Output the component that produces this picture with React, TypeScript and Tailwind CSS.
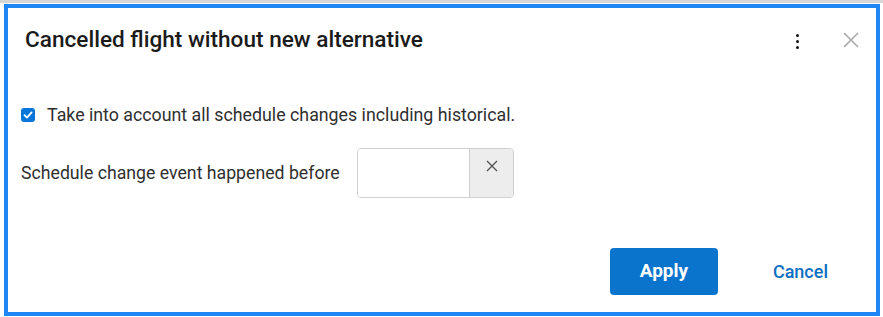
import React from "react";

export default function App() {
  return (
    <div className="w-[883px] h-[317px] bg-white relative overflow-hidden" style={{ fontFamily: "Roboto, 'Liberation Sans', sans-serif" }}>
      <div className="h-[3px] bg-[#d6d6d6]" />
      <div className="ml-[4px] mt-[1px] w-[876px] h-[312px] border-4 border-[#1f87f5] flex flex-col">
        <div className="flex items-center h-[62px] pl-[17px] pr-[16px]">
          <div className="text-[22.6px] leading-[28px] font-medium text-[#1b1b1b] flex-1 pt-[2px]">Cancelled flight without new alternative</div>
          <div className="flex flex-col gap-[3px] items-center mr-[44px] mt-[4px]">
            <span className="w-[3px] h-[3px] rounded-full bg-[#111]" />
            <span className="w-[3px] h-[3px] rounded-full bg-[#111]" />
            <span className="w-[3px] h-[3px] rounded-full bg-[#111]" />
          </div>
          <svg width="16" height="16" viewBox="0 0 16 16" className="mr-[1px] mt-[2px]">
            <path d="M1 1 L15 15 M15 1 L1 15" stroke="#a9a9a9" strokeWidth="1.6" />
          </svg>
        </div>
        <div className="flex items-center gap-[12px] pl-[13px] mt-[33px]">
          <span className="w-[14px] h-[14px] rounded-[3px] bg-[#0b76da] flex items-center justify-center">
            <svg width="10" height="10" viewBox="0 0 10 10">
              <path d="M1.5 5.2 L4 7.6 L8.6 2.4" stroke="white" strokeWidth="1.8" fill="none" strokeLinecap="round" strokeLinejoin="round" />
            </svg>
          </span>
          <span className="text-[17.8px] leading-[24px] text-[#2f2f2f]">Take into account all schedule changes including historical.</span>
        </div>
        <div className="flex items-center pl-[13px] mt-[21px]">
          <span className="text-[17.7px] text-[#2f2f2f] w-[336px]">Schedule change event happened before</span>
          <div className="flex h-[50px] w-[157px] border border-[#cfcfcf] rounded-[4px] overflow-hidden">
            <div className="w-[111px] bg-white" />
            <div className="flex-1 bg-[#ededed] border-l border-[#cfcfcf] flex items-start justify-center pt-[11px]">
              <svg width="12" height="12" viewBox="0 0 12 12">
                <path d="M1 1 L11 11 M11 1 L1 11" stroke="#555" strokeWidth="1.4" />
              </svg>
            </div>
          </div>
        </div>
        <div className="flex justify-end items-center mt-[50px] pr-[48px] gap-[55px]">
          <button className="w-[108px] h-[47px] rounded-[4px] bg-[#0a74cc] text-white text-[19px] font-bold">Apply</button>
          <span className="text-[18px] font-medium text-[#0d6fc1]">Cancel</span>
        </div>
      </div>
    </div>
  );
}
